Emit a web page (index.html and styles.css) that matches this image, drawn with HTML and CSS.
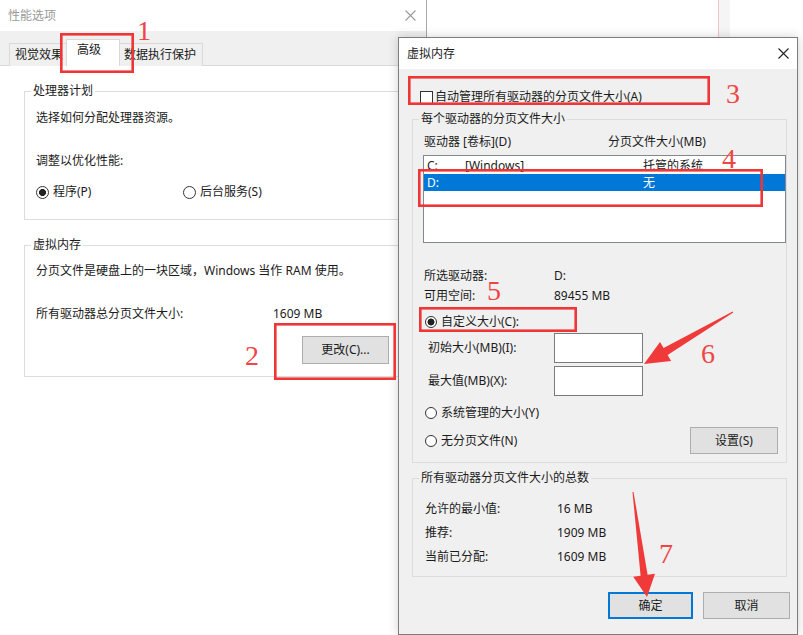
FILE: index.html
```html
<!DOCTYPE html>
<html lang="zh-CN">
<head>
<meta charset="utf-8">
<title>虚拟内存</title>
<link rel="stylesheet" href="styles.css">
</head>
<body>
<div class="desk">
  <div class="bg-strip"></div>

  <section class="win perf">
    <header class="titlebar">
      <span class="title">性能选项</span>
      <svg class="close" viewBox="0 0 11 11"><path d="M0.5 0.5L10.5 10.5M10.5 0.5L0.5 10.5" stroke="#9a9a9a" stroke-width="1.1" fill="none"/></svg>
    </header>
    <nav class="tabs">
      <span class="tab t1">视觉效果</span>
      <span class="tab active">高级</span>
      <span class="tab t3">数据执行保护</span>
    </nav>
    <div class="page">
      <fieldset class="group g-cpu">
        <legend>处理器计划</legend>
        <p class="line l-a">选择如何分配处理器资源。</p>
        <p class="line l-b">调整以优化性能:</p>
        <div class="radio-row">
          <span class="radio on r-prog"><i class="dot"></i>程序(P)</span>
          <span class="radio"><i class="dot"></i>后台服务(S)</span>
        </div>
      </fieldset>
      <fieldset class="group g-vm">
        <legend>虚拟内存</legend>
        <p class="line l-c">分页文件是硬盘上的一块区域，Windows 当作 RAM 使用。</p>
        <div class="kv l-d"><span class="k-total">所有驱动器总分页文件大小:</span><span>1609 MB</span></div>
        <button class="btn btn-change">更改(C)...</button>
      </fieldset>
    </div>
  </section>

  <section class="win vm">
    <header class="titlebar">
      <span class="title">虚拟内存</span>
      <svg class="close" viewBox="0 0 11 11"><path d="M0.5 0.5L10.5 10.5M10.5 0.5L0.5 10.5" stroke="#222" stroke-width="1.1" fill="none"/></svg>
    </header>
    <div class="vm-body">
      <div class="check-row"><i class="check"></i>自动管理所有驱动器的分页文件大小(A)</div>

      <fieldset class="group g-drive">
        <legend>每个驱动器的分页文件大小</legend>
        <div class="list-head"><span class="h1">驱动器 [卷标](D)</span><span>分页文件大小(MB)</span></div>
        <div class="listbox">
          <div class="li"><span class="c1">C:</span><span class="c2">[Windows]</span><span>托管的系统</span></div>
          <div class="li sel"><span class="c1">D:</span><span class="c2"></span><span>无</span></div>
        </div>
        <div class="info">
          <div class="info-row"><span class="ik">所选驱动器:</span><span>D:</span></div>
          <div class="info-row"><span class="ik">可用空间:</span><span>89455 MB</span></div>
        </div>
        <span class="radio on r-custom"><i class="dot"></i>自定义大小(C):</span>
        <div class="field-row fr1"><span class="fl">初始大小(MB)(I):</span><input class="field" type="text"></div>
        <div class="field-row fr2"><span class="fl">最大值(MB)(X):</span><input class="field" type="text"></div>
        <span class="radio r-sys"><i class="dot"></i>系统管理的大小(Y)</span>
        <div class="last-row">
          <span class="radio"><i class="dot"></i>无分页文件(N)</span>
          <button class="btn btn-set">设置(S)</button>
        </div>
      </fieldset>

      <fieldset class="group g-total">
        <legend>所有驱动器分页文件大小的总数</legend>
        <div class="sum">
          <div class="sum-row"><span class="sk">允许的最小值:</span><span>16 MB</span></div>
          <div class="sum-row"><span class="sk">推荐:</span><span>1909 MB</span></div>
          <div class="sum-row"><span class="sk">当前已分配:</span><span>1609 MB</span></div>
        </div>
      </fieldset>

      <div class="actions">
        <button class="btn btn-ok">确定</button>
        <button class="btn btn-cancel">取消</button>
      </div>
    </div>
  </section>

  <svg class="marks" viewBox="0 0 803 635" width="803" height="635">
    <g fill="none" stroke="#ef3535" stroke-width="2.6">
      <rect x="61.3" y="34.3" width="71.4" height="37.4"/>
      <rect x="275.3" y="324.3" width="119.4" height="54.4"/>
      <rect x="409.3" y="77.3" width="299.4" height="26.4"/>
      <rect x="419.3" y="170.3" width="342.4" height="35.4"/>
      <rect x="420.3" y="308.3" width="155.4" height="22.4"/>
    </g>
    <g fill="#f03a3a">
      <polygon points="733.3,312.4 667.6,354.9 671.2,360.9 644,364 660,341.9 663.6,347.9 732.7,311.6"/>
      <polygon points="633.5,491.9 647.6,574.7 655,573.7 647,597 633.2,576.7 640.6,575.7 632.5,492.1"/>
    </g>
    <g class="num" fill="#f04545">
      <text x="137" y="40">1</text>
      <text x="245" y="365">2</text>
      <text x="726" y="103">3</text>
      <text x="722" y="168">4</text>
      <text x="487" y="300">5</text>
      <text x="701" y="363">6</text>
      <text x="659" y="563">7</text>
    </g>
  </svg>
</div>
</body>
</html>
```

FILE: styles.css
```css
* { box-sizing: border-box; margin: 0; padding: 0; }
html, body { width: 803px; height: 635px; overflow: hidden; background: #fff; }
body {
  font-family: "Noto Sans", "Noto Sans CJK SC", "Microsoft YaHei", sans-serif;
  font-size: 12px;
  line-height: 16px;
  color: #1b1b1b;
}
.desk { position: relative; width: 803px; height: 635px; }

.bg-strip {
  position: absolute; left: 718px; top: 0; width: 12px; height: 37px;
  background: #f5f5f5; border-left: 1px solid #f1c4c8;
}

.win { position: absolute; display: flex; flex-direction: column; }
.titlebar { display: flex; align-items: center; justify-content: space-between; height: 31px; flex: none; }
.close { width: 11px; height: 11px; display: block; }

/* background dialog */
.perf { left: 0; top: 0; width: 427px; height: 635px; background: #fff; border-right: 1px solid #a8a8a8; }
.perf .titlebar { padding-left: 8px; color: #9a9a9a; }
.perf .close { margin-right: 10px; }

.tabs {
  display: flex; align-items: flex-end; height: 35px; flex: none;
  background: #f0f0f0; padding-left: 9px; border-bottom: 1px solid #dadada;
}
.tab {
  height: 23px; margin-bottom: -1px; border: 1px solid #d9d9d9; border-bottom: none;
  background: #f0f0f0; line-height: 21px; color: #1b1b1b; white-space: nowrap;
}
.t1 { width: 57px; padding-left: 5px; border-right: none; overflow: hidden; }
.tab.active {
  position: relative; z-index: 1; width: 54px; height: 27px; background: #fff;
  padding: 2px 0 0 10px; line-height: 16px;
}
.t3 { width: 83px; padding-left: 4px; border-left: none; }

.page { flex: 1; padding-left: 24px; }

.group { border: 1px solid #dcdcdc; padding: 0 0 0 11px; min-width: 0; }
.group legend { padding: 0 2px; margin-left: -5px; line-height: 14px; }

.g-cpu { margin-top: 18px; width: 390px; padding-bottom: 19px; }
.l-a { margin-top: 12px; }
.l-b { margin-top: 27px; }
.radio-row { display: flex; margin-top: 15px; }
.radio { display: flex; align-items: center; white-space: nowrap; }
.dot {
  display: block; width: 13px; height: 13px; border: 1px solid #333; border-radius: 50%;
  background: #fff; margin-right: 4px; flex: none;
}
.radio.on .dot { background: radial-gradient(circle, #222 0 3.2px, #fff 3.8px); }
.r-prog { width: 147px; }

.g-vm { margin-top: 18px; width: 390px; padding-bottom: 12px; }
.l-c { margin-top: 11px; }
.kv { display: flex; margin-top: 27px; }
.k-total { width: 237px; }

.btn {
  display: block; font-family: inherit; font-size: 12px; color: #1b1b1b;
  background: #e1e1e1; border: 1px solid #adadad; line-height: 16px;
}
.btn-change { margin: 14px 0 0 266px; width: 87px; height: 28px; }

/* foreground dialog */
.vm {
  left: 398px; top: 37px; width: 400px; height: 598px; background: #f0f0f0;
  border: 1px solid #7d7d7d; box-shadow: 0 0 10px rgba(0,0,0,.18);
}
.vm .titlebar { background: #fff; padding-left: 8px; }
.vm .close { margin-right: 8px; }
.vm-body { padding: 0 10px 0 13px; }

.check-row { display: flex; align-items: center; margin-top: 20px; padding-left: 8px; }
.check { display: block; width: 13px; height: 13px; border: 1px solid #333; background: #fff; margin-right: 2px; }

.g-drive { margin-top: 7px; padding-bottom: 8px; }
.list-head { display: flex; margin-top: 8px; }
.h1 { width: 184px; }
.listbox {
  margin: 5px 0 0 -1px; width: 363px; height: 88px; background: #fff;
  border: 1px solid #828790; padding-top: 1px;
}
.li { display: flex; height: 17px; line-height: 17px; padding-left: 3px; }
.li.sel { background: #0078d7; color: #fff; }
.c1 { width: 38px; }
.c2 { width: 178px; }

.info { margin-top: 23px; }
.info-row { display: flex; line-height: 20px; }
.ik { width: 130px; }

.r-custom { margin: 8px 0 0 1px; }
.r-custom .dot, .r-sys .dot, .last-row .dot { width: 12px; height: 12px; margin-right: 4px; }
.field-row { display: flex; align-items: center; height: 30px; }
.fr1 { margin-top: 3px; }
.fr2 { margin-top: 3px; }
.fl { width: 130px; padding-left: 4px; }
.field { width: 89px; height: 30px; border: 1px solid #7a7a7a; background: #fff; outline: none; }

.r-sys { margin: 9px 0 0 1px; }
.last-row { display: flex; align-items: center; justify-content: space-between; margin-top: 6px; height: 27px; padding-left: 1px; }
.btn-set { width: 88px; height: 27px; margin-right: 8px; }

.g-total { margin-top: 8px; padding-bottom: 7px; }
.sum { margin-top: 12px; padding-left: 1px; }
.sum-row { display: flex; height: 24px; line-height: 24px; }
.sk { width: 132px; }

.actions { display: flex; justify-content: flex-end; gap: 10px; margin: 15px -3px 0 0; }
.btn-ok { width: 85px; height: 27px; border-color: #0078d7; box-shadow: inset 0 0 0 1px #0078d7; }
.btn-cancel { width: 87px; height: 27px; }

/* annotations overlay */
.marks { position: absolute; left: 0; top: 0; z-index: 10; pointer-events: none; }
.num text { font-family: "Liberation Serif", "Times New Roman", serif; font-size: 28px; }
```
